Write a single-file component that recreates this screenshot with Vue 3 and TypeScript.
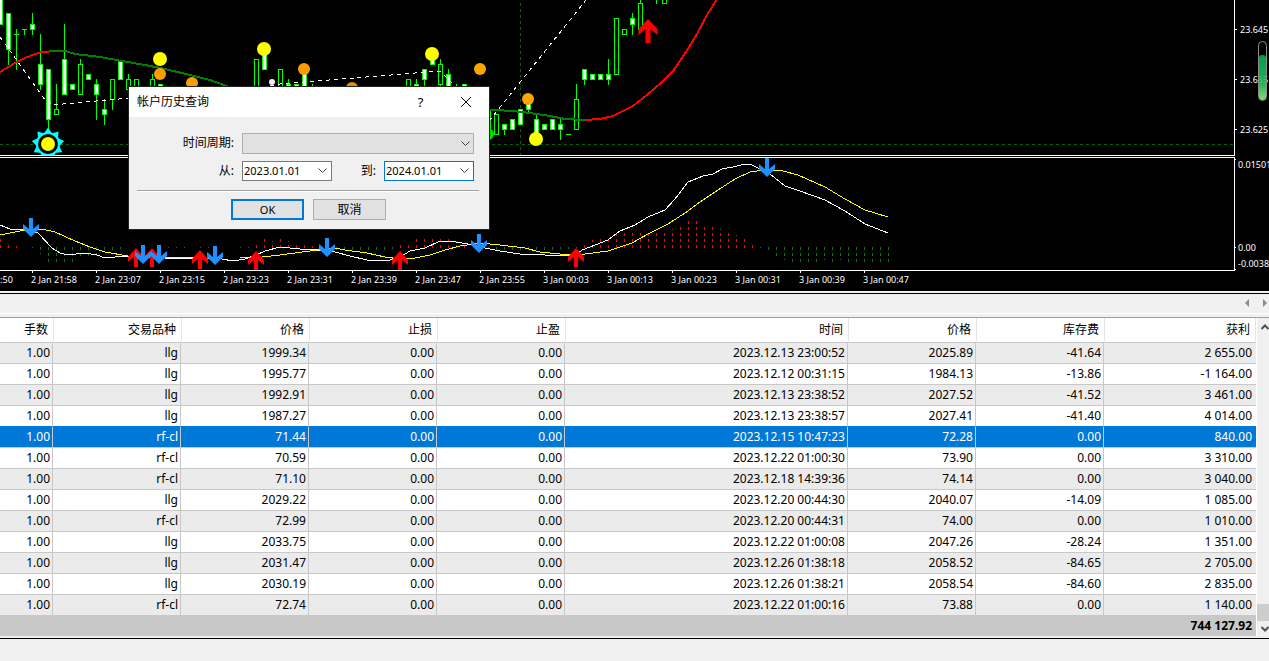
<script setup lang="ts">
import { ref } from 'vue'

interface Candle {
  x: number
  high: number
  low: number
  top: number
  bottom: number
  hollow: boolean
}

type Row = [string, string, string, string, string, string, string, string, string]

const c = (x: number, high: number, low: number, top: number, bottom: number, hollow = false): Candle => ({
  x, high, low, top, bottom, hollow,
})

const candles: Candle[] = [
  c(0, -5, 25, -5, 25), c(8, 13, 65, 13, 50), c(16, 29, 70, 34, 35), c(24, 29, 35, 29, 30),
  c(32, 13, 35, 24, 30), c(40, 34, 90, 64, 85), c(48, 69, 136, 69, 120), c(56, 84, 115, 109, 115, true),
  c(64, 24, 95, 59, 95), c(72, 84, 90, 84, 90), c(80, 59, 95, 64, 95, true), c(88, 74, 80, 74, 80),
  c(96, 79, 120, 84, 95), c(104, 99, 125, 109, 115), c(112, 79, 110, 79, 100, true), c(120, 60, 80, 60, 80),
  c(128, 74, 105, 79, 90, true), c(136, 79, 95, 79, 95, true), c(152, 74, 95, 79, 95, true), c(160, 84, 95, 84, 95),
  c(256, 59, 95, 59, 95, true), c(264, 50, 70, 50, 70), c(280, 69, 95, 69, 95, true), c(288, 79, 95, 84, 95),
  c(296, 84, 95, 84, 95), c(304, 70, 95, 70, 95), c(312, 84, 95, 90, 95),
  c(408, 79, 95, 79, 95, true), c(416, 79, 95, 84, 95), c(424, 69, 90, 69, 80), c(432, 50, 65, 50, 65),
  c(440, 59, 90, 64, 85, true), c(448, 69, 95, 74, 95), c(456, 84, 95, 90, 95), c(464, 84, 95, 84, 95),
  c(488, 111, 135, 111, 135, true), c(496, 114, 135, 114, 135, true), c(504, 124, 135, 124, 130),
  c(512, 119, 130, 119, 130), c(520, 109, 125, 109, 125), c(528, 100, 112, 100, 110), c(536, 115, 134, 119, 134),
  c(544, 124, 130, 124, 130), c(552, 119, 130, 119, 130), c(560, 119, 140, 124, 130), c(568, 134, 135, 134, 135),
  c(576, 84, 130, 99, 130, true), c(584, 69, 85, 69, 80), c(592, 74, 80, 74, 80), c(600, 74, 80, 74, 80),
  c(608, 59, 85, 74, 80), c(616, 18, 75, 18, 75, true), c(624, 29, 35, 29, 35, true), c(632, 13, 35, 18, 25),
  c(640, -2, 30, 3, 30, true), c(656, -2, 4, -2, 0), c(664, -2, 4, -2, 4, true),
]

const dots = [
  { x: 160, y: 74, r: 6, fill: '#f99d00' },
  { x: 160, y: 59, r: 7, fill: '#ffff00' },
  { x: 192, y: 83, r: 6, fill: '#f99d00' },
  { x: 264, y: 49, r: 7, fill: '#ffff00' },
  { x: 304, y: 69, r: 6, fill: '#ff9d00' },
  { x: 352, y: 88, r: 6, fill: '#e09000' },
  { x: 432, y: 54, r: 7, fill: '#ffff00' },
  { x: 480, y: 69, r: 6, fill: '#ffa500' },
  { x: 528, y: 99, r: 6, fill: '#ffa500' },
  { x: 536, y: 139, r: 7, fill: '#ffff00' },
  { x: 488, y: 134, r: 6, fill: '#00d800' },
  { x: 272, y: 82, r: 3, fill: '#eeeeee' },
]

const sunPoints = Array.from({ length: 18 }, (_, i) => {
  const radius = i % 2 ? 11.5 : 16.5
  const angle = (i * Math.PI) / 9
  return `${(48 + radius * Math.sin(angle)).toFixed(1)},${(144 - radius * Math.cos(angle)).toFixed(1)}`
}).join(' ')

// Oscillator histogram: [x, end of the column]; values above the zero level are red.
const rising: [number, number][] = [
  [0, 239], [8, 245], [16, 246], [200, 247], [208, 247], [256, 245], [264, 239], [272, 241], [280, 238], [288, 241],
  [296, 245], [304, 245], [312, 246], [400, 245], [408, 245], [416, 239], [424, 238], [432, 238], [440, 238],
  [448, 238], [456, 241], [464, 245], [576, 247], [584, 245], [592, 240], [600, 238], [608, 238], [616, 233],
  [624, 233], [632, 233], [640, 233], [648, 233], [656, 233], [664, 233], [672, 229], [680, 227], [688, 221],
  [696, 221], [704, 227], [712, 227], [720, 229], [728, 233], [736, 235], [744, 239], [752, 245], [760, 247],
]
const falling: [number, number][] = [
  [32, 248], [40, 254], [48, 262], [56, 262], [64, 262], [72, 262], [80, 256], [88, 256], [96, 256], [104, 253],
  [112, 250], [120, 249], [168, 248], [176, 248], [184, 248], [240, 248], [248, 248], [336, 250], [344, 250],
  [352, 250], [360, 250], [368, 250], [376, 250], [384, 250], [392, 249], [488, 249], [496, 250], [504, 250],
  [512, 250], [520, 250], [528, 250], [536, 250], [544, 250], [552, 250], [560, 249], [568, 249],
  [768, 250], [776, 256], [784, 260], [792, 262], [800, 262], [808, 262], [816, 262], [824, 260], [832, 262],
  [840, 260], [848, 262], [856, 262], [864, 262], [872, 262], [880, 262], [888, 262],
]

const upArrows = [[136, 248], [152, 248], [200, 250], [256, 251], [400, 251], [576, 248]]
const downArrows = [[31, 237], [143, 264], [159, 264], [215, 265], [327, 257], [479, 253], [767, 177]]

const times = [
  '2 Jan 21:50', '2 Jan 21:58', '2 Jan 23:07', '2 Jan 23:15', '2 Jan 23:23', '2 Jan 23:31', '2 Jan 23:39',
  '2 Jan 23:47', '2 Jan 23:55', '3 Jan 00:03', '3 Jan 00:13', '3 Jan 00:23', '3 Jan 00:31', '3 Jan 00:39',
  '3 Jan 00:47',
]

const columns = ['手数', '交易品种', '价格', '止损', '止盈', '时间', '价格', '库存费', '获利']
const rows: Row[] = [
  ['1.00', 'llg', '1999.34', '0.00', '0.00', '2023.12.13 23:00:52', '2025.89', '-41.64', '2 655.00'],
  ['1.00', 'llg', '1995.77', '0.00', '0.00', '2023.12.12 00:31:15', '1984.13', '-13.86', '-1 164.00'],
  ['1.00', 'llg', '1992.91', '0.00', '0.00', '2023.12.13 23:38:52', '2027.52', '-41.52', '3 461.00'],
  ['1.00', 'llg', '1987.27', '0.00', '0.00', '2023.12.13 23:38:57', '2027.41', '-41.40', '4 014.00'],
  ['1.00', 'rf-cl', '71.44', '0.00', '0.00', '2023.12.15 10:47:23', '72.28', '0.00', '840.00'],
  ['1.00', 'rf-cl', '70.59', '0.00', '0.00', '2023.12.22 01:00:30', '73.90', '0.00', '3 310.00'],
  ['1.00', 'rf-cl', '71.10', '0.00', '0.00', '2023.12.18 14:39:36', '74.14', '0.00', '3 040.00'],
  ['1.00', 'llg', '2029.22', '0.00', '0.00', '2023.12.20 00:44:30', '2040.07', '-14.09', '1 085.00'],
  ['1.00', 'rf-cl', '72.99', '0.00', '0.00', '2023.12.20 00:44:31', '74.00', '0.00', '1 010.00'],
  ['1.00', 'llg', '2033.75', '0.00', '0.00', '2023.12.22 01:00:08', '2047.26', '-28.24', '1 351.00'],
  ['1.00', 'llg', '2031.47', '0.00', '0.00', '2023.12.26 01:38:18', '2058.52', '-84.65', '2 705.00'],
  ['1.00', 'llg', '2030.19', '0.00', '0.00', '2023.12.26 01:38:21', '2058.54', '-84.60', '2 835.00'],
  ['1.00', 'rf-cl', '72.74', '0.00', '0.00', '2023.12.22 01:00:16', '73.88', '0.00', '1 140.00'],
]

const selected = ref(4)
const open = ref(true)
const from = ref('2023.01.01')
const to = ref('2024.01.01')
</script>

<template>
  <main class="terminal">
    <section class="chart">
      <svg class="plot" role="img" aria-label="Price chart">
        <defs>
          <clipPath id="main-pane"><rect x="0" y="0" width="100%" height="155" /></clipPath>
        </defs>
        <g shape-rendering="crispEdges" fill="none">
          <line class="grid" x1="0" y1="144.5" x2="100%" y2="144.5" />
          <line class="grid" x1="520.5" y1="3" x2="520.5" y2="155" />
          <g v-for="k in candles" :key="k.x">
            <rect :x="k.x" :y="k.high" width="1" :height="k.low - k.high" fill="#00ff00" />
            <rect :x="k.x - 2" :y="k.top" width="5" :height="k.bottom - k.top" fill="#00ff00" />
            <rect
              v-if="k.bottom - k.top > 2" :x="k.x - 1" :y="k.top + 1" width="3" :height="k.bottom - k.top - 2"
              :fill="k.hollow ? '#000000' : '#ffffff'"
            />
          </g>
        </g>

        <g fill="none" stroke-width="2" shape-rendering="crispEdges">
          <polyline stroke="#ff0000" points="0,72 15,63 25,58 35,54 42,52 49,52" />
          <polyline
            stroke="#008000"
            points="49,51 65,51 75,54 100,57 122,61 145,65 165,69 190,75 210,80 235,89"
          />
          <polyline stroke="#008000" points="486,110 495,110 512,111 530,113 550,116 565,119 585,120" />
          <polyline
            stroke="#ff0000"
            points="585,120 600,119 613,116 633,106 648,94 662,82 673,71 686,52 697,34 707,15 717,-1"
          />
        </g>
        <g fill="none" stroke="#ffffff" stroke-dasharray="4 4" shape-rendering="crispEdges">
          <polyline points="0,37 18,62 45,100 52,105 130,98" />
          <polyline points="262,87 280,84 440,71 456,87" />
          <polyline points="489,121 586,0" />
        </g>

        <g clip-path="url(#main-pane)">
          <polygon :points="sunPoints" fill="#00ffff" />
          <circle cx="48" cy="144" r="12" fill="#00ffff" />
          <circle cx="48" cy="144" r="10" fill="#000000" />
          <circle cx="48" cy="144" r="7" fill="#ffff00" />
        </g>
        <circle v-for="d in dots" :key="`${d.x}-${d.y}`" :cx="d.x" :cy="d.y" :r="d.r" :fill="d.fill" />
        <path transform="translate(648 19)" d="M0 0 9.5 10V16L2.5 10V24H-2.5V10L-9.5 16V10Z" fill="#ff0000" />

        <g shape-rendering="crispEdges" fill="none">
          <rect x="0" y="155" width="100%" height="1" fill="#ffffff" />
          <rect x="0" y="156" width="100%" height="1" fill="#000000" />
          <rect x="0" y="157" width="100%" height="1" fill="#ffffff" />
          <line
            v-for="[x, y] in rising" :key="`r${x}`" :x1="x + 0.5" y1="248" :x2="x + 0.5" :y2="y"
            stroke="#ff0000" stroke-dasharray="3 3"
          />
          <line
            v-for="[x, y] in falling" :key="`f${x}`" :x1="x + 0.5" y1="247" :x2="x + 0.5" :y2="y"
            stroke="#008000" stroke-dasharray="3 3"
          />
          <polyline
            stroke="#ffff00"
            points="0,235 10,233 25,230 42,229 55,232 75,241 90,247 105,252 128,256 150,257 200,258 240,258 262,257 280,255 310,251 335,248 345,250 367,253 385,257 400,259 415,258 430,255 445,250 460,246 480,243 500,245 525,248 540,252 560,254 585,254 608,251 620,247 632,243 648,234 668,224 685,213 700,202 715,192 735,179 750,172 765,170 783,171 798,175 825,187 845,199 865,210 888,217"
          />
          <polyline
            stroke="#ffffff"
            points="0,225 10,229 28,230 38,233 52,248 60,253 68,255 85,253 97,255 105,258 115,257 125,256 140,257 165,258 200,258 222,259 233,261 245,259 256,255 265,251 280,247 300,249 318,250 335,252 350,256 367,260 390,260 400,257 410,251 425,248 440,241 450,241 468,244 480,247 500,251 520,254 545,255 575,256 582,250 590,247 608,240 620,231 635,225 648,217 665,210 675,199 688,182 703,176 713,174 722,169 733,167 745,164 752,165 760,169 770,174 785,186 800,191 825,200 845,211 865,224 888,233"
          />
        </g>
        <path
          v-for="[x, y] in upArrows" :key="`u${x}`" :transform="`translate(${x} ${y})`"
          d="M0 0 8 9V14L2 9V19H-2V9L-8 14V9Z" fill="#ff0000"
        />
        <path
          v-for="[x, y] in downArrows" :key="`d${x}`" :transform="`translate(${x} ${y})`"
          d="M0 0 8-8V-13L2-8V-19H-2V-8L-8-13V-8Z" fill="#1e90ff"
        />
        <rect x="0" y="270" width="100%" height="1" fill="#ffffff" />
        <rect v-for="n in 14" :key="n" :x="n * 64 - 32" y="271" width="1" height="2" fill="#ffffff" />
      </svg>

      <svg class="scale" role="img" aria-label="Price scale">
        <defs>
          <linearGradient id="level" x1="0" y1="0" x2="0" y2="1">
            <stop offset="0" stop-color="#00b050" />
            <stop offset="0.6" stop-color="#28c060" />
            <stop offset="1" stop-color="#8cf884" />
          </linearGradient>
        </defs>
        <g fill="#ffffff" shape-rendering="crispEdges">
          <rect x="0" y="0" width="1" height="156" />
          <rect x="0" y="157" width="1" height="114" />
          <rect x="1" y="29" width="2" height="1" />
          <rect x="1" y="79" width="2" height="1" />
          <rect x="1" y="129" width="2" height="1" />
          <rect x="1" y="159" width="1" height="1" />
          <rect x="1" y="247" width="1" height="1" />
          <rect x="1" y="269" width="1" height="1" />
        </g>
        <g class="scale-text">
          <text x="6" y="33">23.645</text>
          <text x="6" y="83">23.635</text>
          <text x="6" y="133">23.625</text>
          <text x="4" y="168">0.01501</text>
          <text x="4" y="251">0.00</text>
          <text x="4" y="267">-0.0038</text>
        </g>
        <rect x="25" y="55" width="7" height="45" rx="3" fill="url(#level)" opacity="0.9" />
        <rect x="24.5" y="41.5" width="8" height="59" rx="4" fill="none" stroke="#8c8c8c" />
      </svg>

      <div class="times">
        <span v-for="t in times" :key="t">{{ t }}</span>
      </div>

      <form v-if="open" class="dialog" role="dialog" aria-labelledby="dialog-title" @submit.prevent="open = false">
        <header class="titlebar">
          <h1 id="dialog-title">帐户历史查询</h1>
          <button type="button" class="caption" aria-label="Help">?</button>
          <button type="button" class="caption" aria-label="Close" @click="open = false">
            <svg width="12" height="12" viewBox="0 0 12 12"><path d="M1 1 11 11M11 1 1 11" /></svg>
          </button>
        </header>
        <div class="fields">
          <label for="period">时间周期:</label>
          <div class="combo">
            <select id="period"><option value=""></option></select>
            <svg class="chevron" width="9" height="6" viewBox="0 0 9 6"><path d="M.5.5 4.5 4.5 8.5.5" /></svg>
          </div>
          <label for="from">从:</label>
          <div class="date">
            <input id="from" v-model="from" type="text" />
            <button type="button" aria-label="Open calendar">
              <svg class="chevron" width="9" height="6" viewBox="0 0 9 6"><path d="M.5.5 4.5 4.5 8.5.5" /></svg>
            </button>
          </div>
          <label for="to">到:</label>
          <div class="date active">
            <input id="to" v-model="to" type="text" />
            <button type="button" aria-label="Open calendar">
              <svg class="chevron" width="9" height="6" viewBox="0 0 9 6"><path d="M.5.5 4.5 4.5 8.5.5" /></svg>
            </button>
          </div>
        </div>
        <hr />
        <div class="actions">
          <button type="submit" class="primary">OK</button>
          <button type="button" @click="open = false">取消</button>
        </div>
      </form>
    </section>

    <nav class="tabs">
      <button type="button" aria-label="Scroll tabs left">
        <svg width="4" height="8" viewBox="0 0 4 8"><path d="M4 0V8L0 4Z" /></svg>
      </button>
      <button type="button" aria-label="Scroll tabs right">
        <svg width="4" height="8" viewBox="0 0 4 8"><path d="M0 0V8L4 4Z" /></svg>
      </button>
    </nav>

    <section class="history">
      <table>
        <colgroup>
          <col class="w-lots" /><col class="w-std" /><col class="w-std" /><col class="w-std" /><col class="w-std" />
          <col class="w-time" /><col class="w-std" /><col class="w-std" /><col />
        </colgroup>
        <thead>
          <tr><th v-for="(name, i) in columns" :key="i" scope="col">{{ name }}</th></tr>
        </thead>
        <tbody>
          <tr v-for="(row, r) in rows" :key="r" :class="{ selected: r === selected }" @click="selected = r">
            <td v-for="(cell, i) in row" :key="i">{{ cell }}</td>
          </tr>
        </tbody>
        <tfoot>
          <tr><td colspan="9">744 127.92</td></tr>
        </tfoot>
      </table>
      <div class="scrollbar">
        <button type="button" aria-label="Scroll up">
          <svg width="8" height="6" viewBox="0 0 8 6"><path d="M.5 5 4 1.5 7.5 5" /></svg>
        </button>
        <div class="track"><div class="thumb"></div></div>
        <button type="button" class="down" aria-label="Scroll down">
          <svg width="8" height="6" viewBox="0 0 8 6"><path d="M.5 1 4 4.5 7.5 1" /></svg>
        </button>
      </div>
    </section>
    <footer class="status"></footer>
  </main>
</template>

<style>
body {
  margin: 0;
  background: #f0f0f0;
}
</style>

<style scoped>
.terminal {
  display: flex;
  flex-direction: column;
  min-height: 100vh;
  background: #f0f0f0;
  color: #000;
  font: 12px/20px "Noto Sans", "Noto Sans CJK SC", sans-serif;
  overflow: hidden;
}
button, input, select {
  box-sizing: border-box;
  margin: 0;
  padding: 0;
  border: 0;
  border-radius: 0;
  background: none;
  color: inherit;
  font: inherit;
  outline: none;
}
.chart {
  position: relative;
  display: grid;
  grid-template-columns: minmax(0, 1fr) 35px;
  grid-template-rows: 273px 18px;
  background: #000;
  border-bottom: 2px solid #f4f0f4;
}
.plot, .scale {
  display: block;
  width: 100%;
  height: 100%;
}
.grid {
  stroke: #006400;
  stroke-dasharray: 3 3;
}
.scale-text {
  fill: #fff;
  font-size: 9px;
}
.times {
  grid-column: 1 / -1;
  display: flex;
  margin-left: -33px;
  color: #fff;
  font-size: 9px;
  line-height: 14px;
  white-space: nowrap;
}
.times span {
  flex: 0 0 64px;
}
.dialog {
  position: absolute;
  left: 128px;
  top: 86px;
  width: 360px;
  background: #f0f0f0;
  border: 1px solid #242424;
}
.titlebar {
  display: flex;
  align-items: center;
  height: 30px;
  padding: 0 1px 0 8px;
  background: #fff;
}
.titlebar h1 {
  flex: 1;
  margin: 0;
  font-size: 12px;
  font-weight: 400;
}
.caption {
  display: grid;
  place-items: center;
  width: 45px;
  height: 30px;
  font-size: 13px;
}
.caption path {
  fill: none;
  stroke: #000;
}
.fields {
  display: grid;
  grid-template-columns: 97px 90px 36px 90px;
  grid-template-rows: 21px 20px;
  column-gap: 8px;
  row-gap: 7px;
  padding: 16px 14px 9px 8px;
}
.fields label {
  text-align: right;
}
.combo {
  grid-column: 2 / -1;
  display: grid;
  align-items: center;
}
.combo select {
  grid-area: 1 / 1;
  width: 100%;
  height: 21px;
  border: 1px solid #adadad;
  background: #e1e1e1;
  appearance: none;
}
.combo .chevron {
  grid-area: 1 / 1;
  justify-self: end;
  margin-right: 4px;
  pointer-events: none;
}
.chevron path {
  fill: none;
  stroke: #404040;
}
.date {
  display: flex;
  box-sizing: border-box;
  border: 1px solid #7a7a7a;
  background: #fff;
}
.date.active {
  border-color: #0078d7;
}
.date input {
  flex: 1;
  min-width: 0;
  padding-left: 1px;
  font-size: 11px;
}
.date button {
  display: grid;
  place-items: center;
  width: 17px;
}
hr {
  margin: 0 10px 0 8px;
  border: 0;
  border-top: 1px solid #a0a0a0;
  border-bottom: 1px solid #fff;
}
.actions {
  display: flex;
  gap: 9px;
  padding: 7px 0 9px 102px;
}
.actions button {
  width: 73px;
  height: 21px;
  border: 1px solid #adadad;
  background: #e1e1e1;
  line-height: 19px;
}
.actions .primary {
  border: 2px solid #0078d7;
  font-size: 11px;
  line-height: 17px;
}
.tabs {
  display: flex;
  justify-content: flex-end;
  align-items: flex-start;
  gap: 10px;
  box-sizing: border-box;
  height: 25px;
  border-top: 1px solid #000;
  border-bottom: 1px solid #a0a0a0;
  background: linear-gradient(#f0f0f0 19px, #fff 19px, #fff 20px, #f0f0f0 20px);
}
.tabs button {
  display: grid;
  place-items: center;
  width: 8px;
  height: 17px;
}
.tabs path {
  fill: #8c8c8c;
}
.history {
  display: flex;
  padding-bottom: 2px;
  border-bottom: 1px solid #000;
}
table {
  flex: 1;
  min-width: 0;
  table-layout: fixed;
  border-spacing: 0;
  background: #fff;
}
.w-lots { width: 53px; }
.w-std { width: 128px; }
.w-time { width: 283px; }
th {
  height: 24px;
  padding: 0 5px 0 0;
  border-bottom: 1px solid #c8c8c8;
  font-weight: 400;
  text-align: right;
}
th + th {
  border-left: 1px solid #e5e5e5;
}
th:last-child {
  border-right: 1px solid #e5e5e5;
}
td {
  height: 20px;
  padding: 0 2px 0 0;
  border-right: 1px solid #c8c8c8;
  border-bottom: 1px solid #c8c8c8;
  line-height: 20px;
  text-align: right;
  white-space: nowrap;
}
td:last-child {
  padding-right: 4px;
  border-right: 0;
}
tbody tr:nth-child(odd) {
  background: #ebebeb;
}
tbody tr.selected {
  background: #0078d7;
  color: #fff;
}
tbody tr:has(+ .selected) td {
  border-bottom-color: #0078d7;
}
tfoot td {
  border-bottom: 0;
  background: #c8c8c8;
  font-weight: 700;
}
.scrollbar {
  display: flex;
  flex-direction: column;
  width: 12px;
  border-left: 1px solid #fff;
  background: #f0f0f0;
}
.scrollbar button {
  display: grid;
  place-items: center end;
  height: 17px;
}
.scrollbar .down {
  height: 15px;
}
.scrollbar path {
  fill: none;
  stroke: #505050;
  stroke-width: 2;
}
.track {
  display: flex;
  flex: 1;
  flex-direction: column;
  justify-content: flex-end;
}
.thumb {
  height: 17px;
  background: #cdcdcd;
}
.status {
  flex: 1;
  min-height: 22px;
}
</style>
